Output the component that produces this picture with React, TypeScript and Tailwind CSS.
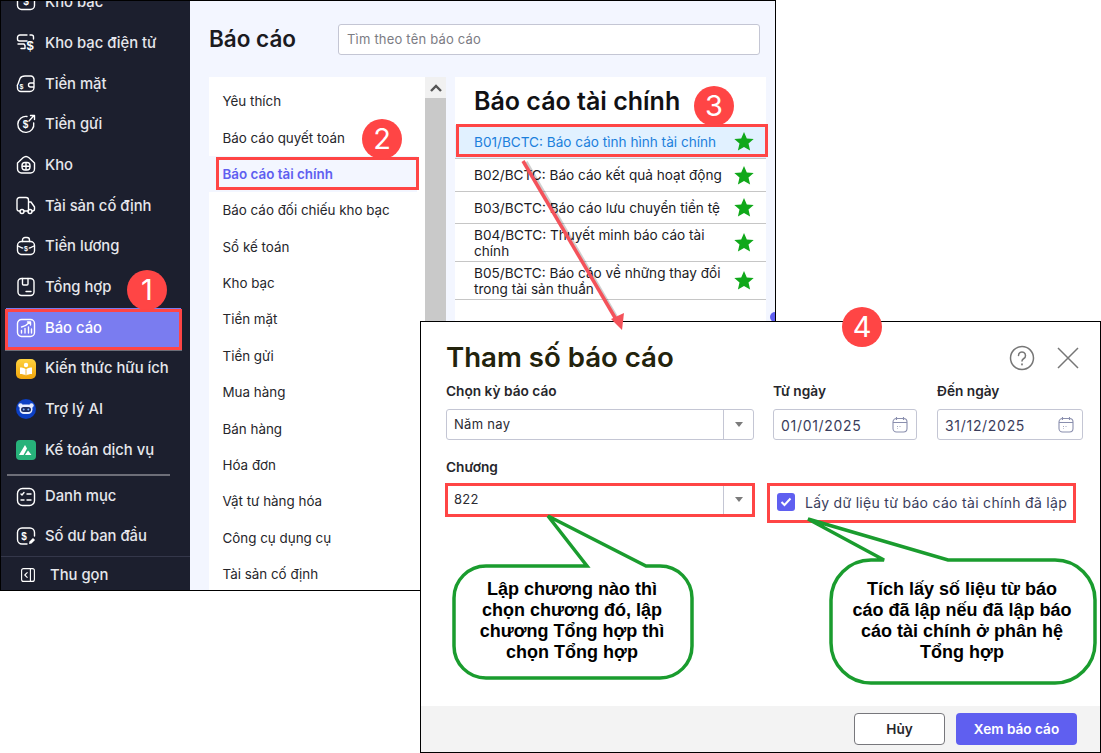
import type { ReactNode } from 'react'

const stroke = {
  fill: 'none',
  stroke: 'currentColor',
  strokeWidth: 1.4,
  strokeLinecap: 'round' as const,
  strokeLinejoin: 'round' as const,
}

function Ico({ children, size = 20 }: { children: ReactNode; size?: number }) {
  return (
    <svg width={size} height={size} viewBox="0 0 20 20" className="shrink-0 text-white">
      {children}
    </svg>
  )
}

function Dollar({ x, y, size = 8 }: { x: number; y: number; size?: number }) {
  return (
    <text x={x} y={y} fontSize={size} fontWeight="700" fill="currentColor" textAnchor="middle" fontFamily="Liberation Sans, sans-serif">
      $
    </text>
  )
}

const icons: Record<string, ReactNode> = {
  bank: (
    <Ico>
      <rect x="1.5" y="1.5" width="17" height="16" rx="4" {...stroke} />
      <Dollar x={10} y={13} size={10} />
    </Ico>
  ),
  ebank: (
    <Ico>
      <path d="M11 2H4a2.5 2.5 0 0 0-2.5 2.5v1.5A2 2 0 0 0 3.500 8H11M2 11h6l1 1.500v3H5" {...stroke} />
      <path d="M14 2h1.500A2 2 0 0 1 17.500 4v2" {...stroke} />
      <Dollar x={14} y={17} size={13} />
    </Ico>
  ),
  cash: (
    <Ico>
      <path d="M2 10l2-5.500C5 2.500 7 2 9 2h6c1.500 0 2.500 1 3 3v3M2 10a3 3 0 0 0-.5 3v1a3.500 3.500 0 0 0 3.500 3.500h9a4 4 0 0 0 4-4V9h-3.500a1.500 1.500 0 0 0 0 4H17" {...stroke} />
      <Dollar x={5.500} y={15} size={7} />
    </Ico>
  ),
  deposit: (
    <Ico>
      <path d="M11 2.500A8 8 0 1 0 17.700 9" {...stroke} />
      <path d="M13 7l5-5.500M14.500 1.500H18.500V5.500" {...stroke} />
      <Dollar x={9.500} y={13.500} size={10} />
    </Ico>
  ),
  store: (
    <Ico>
      <path d="M1.500 8L7 2.800a4.500 4.500 0 0 1 6 0L18.500 8v6a4 4 0 0 1-4 4h-9a4 4 0 0 1-4-4z" {...stroke} />
      <rect x="6" y="7.500" width="8" height="7.500" rx="3" {...stroke} />
      <path d="M10 8v6.500M6.500 11.200h7" {...stroke} />
    </Ico>
  ),
  truck: (
    <Ico>
      <path d="M4 15H3a2 2 0 0 1-2-2V4a2.500 2.500 0 0 1 2.500-2.500H10A2.500 2.500 0 0 1 12.500 4v11H8M12.500 6H15l3.500 5v2a2 2 0 0 1-2 2H16M12 15h0.500" {...stroke} />
      <circle cx="6" cy="15.500" r="2" {...stroke} />
      <circle cx="14" cy="15.500" r="2" {...stroke} />
    </Ico>
  ),
  salary: (
    <Ico>
      <rect x="1.500" y="5.500" width="17" height="13" rx="4" {...stroke} />
      <path d="M6.500 5.500V4A2.500 2.500 0 0 1 9 1.500h2A2.500 2.500 0 0 1 13.500 4v1.500M2 10c3 2 5 2.500 8 2.500s5-.5 8-2.500" {...stroke} />
      <circle cx="10" cy="12" r="2.800" fill="#1c1f2e" />
      <Dollar x={10} y={14.500} size={7} />
    </Ico>
  ),
  summary: (
    <Ico>
      <rect x="2" y="1.500" width="16" height="17" rx="3.500" {...stroke} />
      <path d="M6.500 1.500v5.500a1 1 0 0 0 1 1h3.500a1 1 0 0 0 1-1V1.500M10 14.500h5" {...stroke} />
    </Ico>
  ),
  report: (
    <Ico>
      <rect x="1.500" y="1.500" width="17" height="17" rx="4" {...stroke} />
      <path d="M5.500 15v-2.500M9 15v-4.500M12.500 15V9M5.500 9c3-.5 6-2.500 8.500-5M11.500 4h3v3M15.500 15v-4" {...stroke} />
    </Ico>
  ),
  knowledge: (
    <svg width="20" height="20" viewBox="0 0 20 20" className="shrink-0">
      <defs>
        <linearGradient id="yl" x1="0" y1="0" x2="0" y2="1">
          <stop offset="0" stopColor="#ffd23f" />
          <stop offset="1" stopColor="#f0a50c" />
        </linearGradient>
      </defs>
      <rect width="20" height="20" rx="5" fill="url(#yl)" />
      <circle cx="10" cy="6" r="2.200" fill="#fff" />
      <path d="M4 8.500c2.500 0 4.500.5 6 2 1.500-1.500 3.500-2 6-2V15c-2.500 0-4.500.5-6 1.500C8.500 15.500 6.500 15 4 15z" fill="#fff" />
      <path d="M10 10.500v6" stroke="#f0a50c" strokeWidth="0.800" />
    </svg>
  ),
  ai: (
    <svg width="20" height="20" viewBox="0 0 20 20" className="shrink-0">
      <circle cx="10" cy="10" r="10" fill="#0b3fc4" />
      <circle cx="4.500" cy="6.500" r="2.200" fill="#dfe7ff" />
      <circle cx="15.500" cy="6.500" r="2.200" fill="#dfe7ff" />
      <rect x="3.500" y="5.500" width="13" height="9.500" rx="4.500" fill="#e8eeff" />
      <rect x="5" y="8" width="10" height="5" rx="2.500" fill="#1c2a5e" />
      <circle cx="7.700" cy="10.500" r="1" fill="#7fb2ff" />
      <circle cx="12.300" cy="10.500" r="1" fill="#7fb2ff" />
    </svg>
  ),
  service: (
    <svg width="20" height="20" viewBox="0 0 20 20" className="shrink-0">
      <rect width="20" height="20" rx="4" fill="#27b27a" />
      <path d="M3 15L9 5l2 3.500L7.500 15zM9 15l3-4.500L15.500 15z" fill="#fff" />
    </svg>
  ),
  catalog: (
    <Ico>
      <rect x="1.500" y="1.500" width="17" height="17" rx="5" {...stroke} />
      <path d="M5 7l1 1 2-2.500M11 7h4M5 13h3M11 13h4" {...stroke} />
    </Ico>
  ),
  opening: (
    <Ico>
      <path d="M11 18H6a4.500 4.500 0 0 1-4.500-4.500v-7A4.500 4.500 0 0 1 6 2h8a4.500 4.500 0 0 1 4.500 4.500V10" {...stroke} />
      <Dollar x={8} y={13.500} size={10} />
      <path d="M13 18l.5-2.500 3.500-3.500 2 2-3.500 3.500z" fill="currentColor" />
    </Ico>
  ),
  collapse: (
    <Ico size={16}>
      <rect x="2" y="2" width="16" height="16" rx="2.500" {...stroke} />
      <path d="M13 2.500v15M9 7l-3 3 3 3" {...stroke} />
    </Ico>
  ),
}

const navTop = [
  ['bank', 'Kho bạc'],
  ['ebank', 'Kho bạc điện tử'],
  ['cash', 'Tiền mặt'],
  ['deposit', 'Tiền gửi'],
  ['store', 'Kho'],
  ['truck', 'Tài sản cố định'],
  ['salary', 'Tiền lương'],
  ['summary', 'Tổng hợp'],
  ['report', 'Báo cáo'],
  ['knowledge', 'Kiến thức hữu ích'],
  ['ai', 'Trợ lý AI'],
  ['service', 'Kế toán dịch vụ'],
]

const navBottom = [
  ['catalog', 'Danh mục'],
  ['opening', 'Số dư ban đầu'],
]

const categories = [
  'Yêu thích',
  'Báo cáo quyết toán',
  'Báo cáo tài chính',
  'Báo cáo đối chiếu kho bạc',
  'Sổ kế toán',
  'Kho bạc',
  'Tiền mặt',
  'Tiền gửi',
  'Mua hàng',
  'Bán hàng',
  'Hóa đơn',
  'Vật tư hàng hóa',
  'Công cụ dụng cụ',
  'Tài sản cố định',
]

const reports = [
  { text: 'B01/BCTC: Báo cáo tình hình tài chính', h: 'h-[34px]' },
  { text: 'B02/BCTC: Báo cáo kết quả hoạt động', h: 'h-[33px]' },
  { text: 'B03/BCTC: Báo cáo lưu chuyển tiền tệ', h: 'h-[32px]' },
  { text: 'B04/BCTC: Thuyết minh báo cáo tài chính', h: 'h-[38px]' },
  { text: 'B05/BCTC: Báo cáo về những thay đổi trong tài sản thuần', h: 'h-[38px]' },
]

function NavItem({ icon, label }: { icon: string; label: string }) {
  const active = label === 'Báo cáo'
  return (
    <div className={`flex h-[40.7px] items-center gap-[9px] text-[14.8px] font-medium ${active ? 'ml-[5px] mr-[9px] bg-[#7a7cf0] pl-[10px] text-white' : 'pl-[15px] text-[#e6e7ec]'}`}>
      {icons[icon]}
      <span>{label}</span>
    </div>
  )
}

function Star() {
  return (
    <svg width="20" height="19" viewBox="0 0 20 19" className="shrink-0">
      <path d="M10 0l2.800 6.400 6.900.6-5.200 4.600 1.600 6.800L10 14.900l-6.100 3.500 1.600-6.800L.3 7l6.900-.6z" fill="#10a81a" />
    </svg>
  )
}

function Caret() {
  return (
    <div className="flex w-[30px] shrink-0 items-center justify-center self-stretch border-l border-[#c4c6d4]">
      <div className="h-0 w-0 border-x-[4.500px] border-t-[5px] border-x-transparent border-t-[#7b7b7b]" />
    </div>
  )
}

function SelectBox({ value }: { value: string }) {
  return (
    <div className="flex h-[31px] w-[308px] items-center rounded-[3px] border border-[#c4c6d4] pl-[7px] text-[13px] tracking-[0.3px] text-[#2b2b33]">
      <span className="flex-1 pt-px">{value}</span>
      <Caret />
    </div>
  )
}

function DateBox({ value, w }: { value: string; w: string }) {
  return (
    <div className={`flex h-[31px] ${w} items-center justify-between rounded-[3px] border border-[#c4c6d4] pl-[7px] pr-[8px] text-[14px] tracking-[0.7px] text-[#3a3d5c]`}>
      <span className="pt-px">{value}</span>
      <svg width="16" height="17" viewBox="0 0 16 17" fill="none" stroke="#8a8fae" strokeWidth="1.100">
        <rect x="1" y="2.500" width="14" height="13.500" rx="3.500" />
        <path d="M1 6.500h14M4.500 1v3M11.500 1v3" />
        <path d="M5.500 10v.8M8 10v.8M5.500 12.500v.5" strokeWidth="1" />
      </svg>
    </div>
  )
}

function Badge({ n, className }: { n: number; className: string }) {
  return (
    <div className={`absolute flex h-10 w-10 items-center justify-center rounded-full bg-[#ff4545] text-[29px] font-normal text-white ${className}`}>
      {n}
    </div>
  )
}

function RedBox({ className }: { className: string }) {
  return <div className={`pointer-events-none absolute border-[3px] border-[#ff4545] ${className}`} />
}

export default function App() {
  return (
    <div className="relative h-[753px] w-[1101px] overflow-hidden bg-white font-['Inter',sans-serif]">
      {/* App behind the dialog */}
      <div className="flex h-[591px] w-[776px] overflow-hidden border border-black">
        <aside className="flex h-full w-[189px] shrink-0 flex-col overflow-hidden bg-[#1c1f2e]">
          <div className="-mt-[19px]">
            {navTop.map(([icon, label]) => (
              <NavItem key={label} icon={icon} label={label} />
            ))}
          </div>
          <div className="mb-[1px] ml-[6px] mt-[3.500px] h-[2px] w-[163px] bg-[#6d6e78]" />
          <div>
            {navBottom.map(([icon, label]) => (
              <div key={label} className="flex h-[39.500px] items-center gap-[9px] pl-[15px] text-[14.8px] font-medium text-[#e6e7ec]">
                {icons[icon]}
                <span>{label}</span>
              </div>
            ))}
          </div>
          <div className="flex flex-1 items-center gap-[14px] border-t border-[#34374a] pl-[19px] pt-[3px] text-[14.8px] font-medium text-[#e6e7ec]">
            {icons.collapse}
            <span>Thu gọn</span>
          </div>
        </aside>

        <main className="relative flex-1 bg-[#f3f6ff] pl-[19px] pr-[15px]">
          <div className="flex h-[76px] items-start pt-[22px]">
            <h1 className="w-[129px] text-[22.500px] font-semibold leading-[32px] text-[#1b1b1f]">Báo cáo</h1>
            <div className="mt-[1px] flex h-[31px] flex-1 items-center rounded-[3px] border border-[#c4c6d4] bg-white pl-2 text-[13px] tracking-[0.2px] text-[#7c7c84]">
              Tìm theo tên báo cáo
            </div>
          </div>
          <div className="-mr-[6px] flex h-[513px] gap-[9px]">
            <div className="flex w-[237px] bg-white">
              <div className="flex-1 pt-[6px]">
                {categories.map((c) => (
                  <div
                    key={c}
                    className={`flex h-[36.4px] items-center pl-[13.500px] text-[13.400px] ${
                      c === 'Báo cáo tài chính' ? 'mr-[8px] bg-[#f3f6ff] font-semibold text-[#5f5ff0]' : 'text-[#26262b]'
                    }`}
                  >
                    {c}
                  </div>
                ))}
              </div>
              <div className="w-[21px] bg-[#c9c9c9]">
                <div className="flex h-[21px] items-center justify-center bg-[#f1f1f1]">
                  <svg width="12" height="8" viewBox="0 0 12 8" fill="none" stroke="#555" strokeWidth="2.400">
                    <path d="M1 7l5-5 5 5" />
                  </svg>
                </div>
              </div>
            </div>
            <div className="flex-1 bg-white">
              <h2 className="flex h-[48px] items-center pl-[19px] pt-[2px] text-[25px] font-semibold text-[#111114]">Báo cáo tài chính</h2>
              {reports.map((r, i) => (
                <div
                  key={r.text}
                  className={`flex ${r.h} items-center border-b border-[#c6c6c6] pl-[19px] pr-[12px] text-[13.600px] leading-[16px] ${
                    i === 0 ? 'bg-[#e1f1ff] text-[#1b80dc]' : 'text-[#1b1b1f]'
                  }`}
                >
                  <span className="flex-1 pr-[9px]">{r.text}</span>
                  <Star />
                </div>
              ))}
            </div>
          </div>
          <div className="absolute right-0 top-[311px] h-[10px] w-[5px] rounded-l-full bg-[#5f5ff0]" />
        </main>
      </div>

      {/* Parameter dialog */}
      <section className="absolute left-[420px] top-[321px] flex h-[432px] w-[681px] flex-col border border-black bg-white">
        <div className="flex h-[61px] items-end justify-between pb-[8px] pl-[25px] pr-[21px]">
          <h3 className="text-[27.600px] font-semibold leading-[36px] text-[#23230c]">Tham số báo cáo</h3>
          <div className="flex items-center gap-[22px] pb-[4px]">
            <svg width="26" height="26" viewBox="0 0 26 26" fill="none" stroke="#767676" strokeWidth="1.500" strokeLinecap="round">
              <circle cx="13" cy="13" r="11.500" />
              <path d="M9.500 10.500a3.500 3.500 0 1 1 5.300 3c-1.200.7-1.800 1.300-1.800 2.500" />
              <path d="M13 19.200v.3" strokeWidth="1.800" />
            </svg>
            <svg width="22" height="22" viewBox="0 0 22 22" fill="none" stroke="#767676" strokeWidth="1.500">
              <path d="M1 1l20 20M21 1L1 21" />
            </svg>
          </div>
        </div>
        <div className="flex gap-[18px] pl-[25px]">
          <div className="w-[309px]">
            <label className="mb-[10px] block text-[13.700px] font-semibold leading-[16px] text-[#26262b]">Chọn kỳ báo cáo</label>
            <SelectBox value="Năm nay" />
          </div>
          <div className="w-[145px]">
            <label className="mb-[10px] block text-[13.700px] font-semibold leading-[16px] text-[#26262b]">Từ ngày</label>
            <DateBox value="01/01/2025" w="w-[144px]" />
          </div>
          <div className="ml-[1px] w-[146px]">
            <label className="mb-[10px] block text-[13.700px] font-semibold leading-[16px] text-[#26262b]">Đến ngày</label>
            <DateBox value="31/12/2025" w="w-[146px]" />
          </div>
        </div>
        <div className="mt-[19px] flex gap-[22px] pl-[25px]">
          <div className="w-[309px]">
            <label className="mb-[9px] block text-[13.700px] font-semibold leading-[16px] text-[#26262b]">Chương</label>
            <SelectBox value="822" />
          </div>
          <div className="flex items-center gap-[10px] pt-[30px]">
            <div className="flex h-[18px] w-[18px] items-center justify-center rounded-[3px] bg-[#5f5ff0]">
              <svg width="12" height="10" viewBox="0 0 12 10" fill="none" stroke="#fff" strokeWidth="2">
                <path d="M1.500 5l3 3 6-6.500" />
              </svg>
            </div>
            <span className="text-[14px] tracking-[0.3px] text-[#3a3d5c]">Lấy dữ liệu từ báo cáo tài chính đã lập</span>
          </div>
        </div>
        <div className="mt-auto flex h-[46px] items-center justify-end gap-[11px] bg-[#f3f3f3] pr-[23px]">
          <button className="h-[32px] w-[91px] rounded-[4px] border border-[#77777c] bg-white text-[13.600px] font-semibold text-[#26262b]">Hủy</button>
          <button className="h-[32px] w-[121px] rounded-[4px] bg-[#5f5ff0] text-[13.600px] font-semibold text-white">Xem báo cáo</button>
        </div>
      </section>

      {/* Annotations drawn over the screenshot */}
      <RedBox className="left-[5px] top-[309px] h-[41px] w-[177px] shadow-[0_1px_0_#6d6e78]" />
      <RedBox className="left-[216px] top-[157px] h-[33px] w-[203px]" />
      <RedBox className="left-[456px] top-[124px] h-[33px] w-[312px]" />
      <RedBox className="left-[445px] top-[483px] h-[34px] w-[310px]" />
      <RedBox className="left-[767px] top-[483px] h-[40px] w-[309px]" />

      <Badge n={1} className="left-[127px] top-[270px]" />
      <Badge n={2} className="left-[362px] top-[119px]" />
      <Badge n={3} className="left-[694px] top-[86px]" />
      <Badge n={4} className="left-[842px] top-[307px]" />

      <svg className="pointer-events-none absolute left-0 top-0" width="1101" height="753">
        <path d="M524 160L616 318" stroke="#00000030" strokeWidth="3.500" transform="translate(2 2)" />
        <path d="M523 161L617 321" stroke="#f4525a" strokeWidth="3.500" />
        <path d="M622 330L611 319L624 313z" fill="#f4525a" />
        <path
          d="M548 516L646 566H660A32 32 0 0 1 692 598V646A32 32 0 0 1 660 678H486A32 32 0 0 1 454 646V598A32 32 0 0 1 486 566H587z"
          fill="#fff"
          stroke="#1a9c2e"
          strokeWidth="3.500"
        />
        <path
          d="M808 519L948 560H1055A40 40 0 0 1 1095 600V643A40 40 0 0 1 1055 683H871A40 40 0 0 1 831 643V600A40 40 0 0 1 871 560H884z"
          fill="#fff"
          stroke="#1a9c2e"
          strokeWidth="3.500"
        />
      </svg>

      <div className="absolute left-[456px] top-[579px] w-[232px] text-center font-['Liberation_Sans',sans-serif] text-[18px] font-bold leading-[21px] text-black">
        Lập chương nào thì
        <br />
        chọn chương đó, lập
        <br />
        chương Tổng hợp thì
        <br />
        chọn Tổng hợp
      </div>
      <div className="absolute left-[831px] top-[579px] w-[262px] text-center font-['Liberation_Sans',sans-serif] text-[18px] font-bold leading-[21px] text-black">
        Tích lấy số liệu từ báo
        <br />
        cáo đã lập nếu đã lập báo
        <br />
        cáo tài chính ở phân hệ
        <br />
        Tổng hợp
      </div>
    </div>
  )
}
